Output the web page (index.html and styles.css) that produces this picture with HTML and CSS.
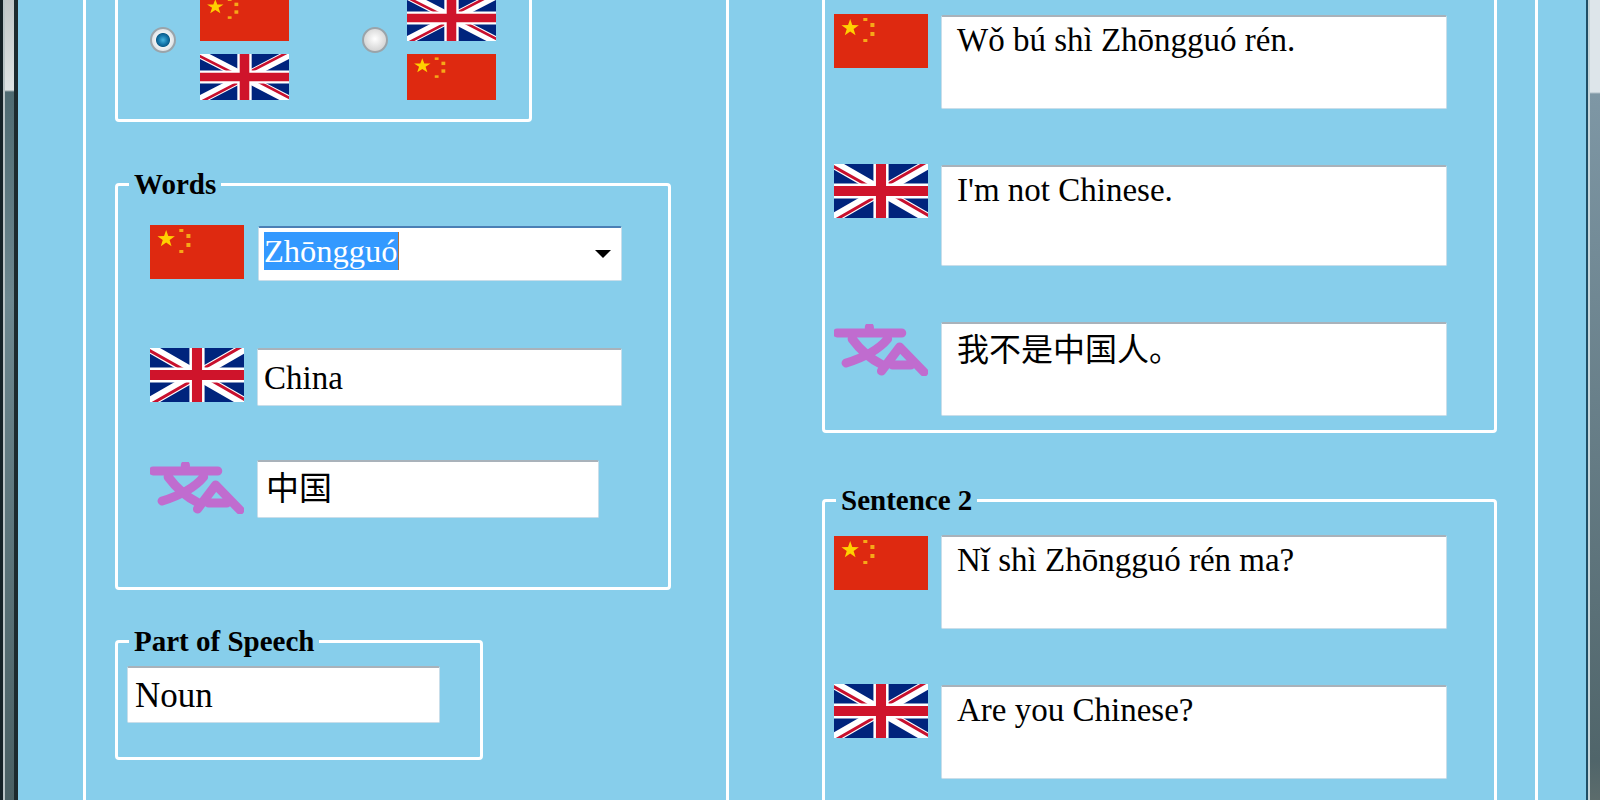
FILE: index.html
```html
<!DOCTYPE html>
<html lang="en">
<head>
    <meta charset="UTF-8">
    <title>Vocabulary</title>
    <link rel="stylesheet" href="styles.css">
</head>
<body>

<!-- shared flag and icon drawings -->
<svg class="defs" width="0" height="0">
    <symbol id="cn" viewBox="0 0 93 54" preserveAspectRatio="none">
        <rect width="93" height="54" fill="#de2910"/>
        <polygon fill="#ffd000" points="16,5 18.1,11.1 24.6,11.2 19.4,15 21.3,21.3 16,17.6 10.7,21.3 12.6,15 7.4,11.2 13.9,11.1"/>
        <rect x="29" y="4" width="4" height="3" fill="#f6a818"/>
        <rect x="36" y="9" width="4" height="4" fill="#f6a818"/>
        <rect x="36" y="18" width="4" height="4" fill="#f6a818"/>
        <rect x="29" y="25" width="4" height="3" fill="#f6a818"/>
    </symbol>
    <symbol id="uk" viewBox="0 0 93 54" preserveAspectRatio="none">
        <rect width="93" height="54" fill="#00247d"/>
        <path d="M0 0L93 54M93 0L0 54" stroke="#fff" stroke-width="10"/>
        <path d="M-1.3 2L41 26M91.7 -2L45 25M94.3 52L47.8 25M1.3 56L47.8 29" stroke="#c8102e" stroke-width="3"/>
        <path d="M46.5 0V54M0 27H93" stroke="#fff" stroke-width="15"/>
        <path d="M46.5 0V54M0 27H93" stroke="#cf142b" stroke-width="10"/>
    </symbol>
    <symbol id="lang" viewBox="0 0 93 52" preserveAspectRatio="none">
        <g fill="none" stroke="#c06ccf" stroke-width="9" stroke-linecap="round" stroke-linejoin="round">
            <path d="M3 9H67M35 3V9M18 15C26 26 38 36 48 41M53 15C44 26 28 34 12 39"/>
            <path d="M47 47L65 23L89 48M58 41H76"/>
        </g>
    </symbol>
</svg>

<div class="window">
    <div class="frame-left"></div>

    <div class="content">
        <div class="panel">

            <!-- left column -->
            <div class="col-left">
                <fieldset class="box box-order">
                    <div class="choice choice-first">
                        <span class="radio radio-on"></span>
                        <div class="flag-stack">
                            <svg class="flag-small"><use href="#cn"/></svg>
                            <svg class="flag-small"><use href="#uk"/></svg>
                        </div>
                    </div>
                    <div class="choice">
                        <span class="radio"></span>
                        <div class="flag-stack">
                            <svg class="flag-small"><use href="#uk"/></svg>
                            <svg class="flag-small"><use href="#cn"/></svg>
                        </div>
                    </div>
                </fieldset>

                <fieldset class="box box-words">
                    <legend>Words</legend>
                    <div class="row row-word1">
                        <svg class="flag"><use href="#cn"/></svg>
                        <div class="field field-select"><span class="selected">Zhōngguó</span><span class="arrow"></span></div>
                    </div>
                    <div class="row row-word2">
                        <svg class="flag"><use href="#uk"/></svg>
                        <div class="field field-word">China</div>
                    </div>
                    <div class="row row-word3">
                        <svg class="flag flag-lang"><use href="#lang"/></svg>
                        <div class="field field-word field-short cjk">中国</div>
                    </div>
                </fieldset>

                <fieldset class="box box-part">
                    <legend>Part of Speech</legend>
                    <div class="field field-part">Noun</div>
                </fieldset>
            </div>

            <!-- right column -->
            <div class="col-right">
                <fieldset class="box box-sentence1">
                    <div class="row">
                        <svg class="flag flag-down"><use href="#cn"/></svg>
                        <div class="field field-text field-a">Wǒ bú shì Zhōngguó rén.</div>
                    </div>
                    <div class="row row-s2">
                        <svg class="flag"><use href="#uk"/></svg>
                        <div class="field field-text field-b">I'm not Chinese.</div>
                    </div>
                    <div class="row row-s3">
                        <svg class="flag flag-lang"><use href="#lang"/></svg>
                        <div class="field field-text field-c cjk">我不是中国人。</div>
                    </div>
                </fieldset>

                <fieldset class="box box-sentence2">
                    <legend>Sentence 2</legend>
                    <div class="row">
                        <svg class="flag"><use href="#cn"/></svg>
                        <div class="field field-text field-d">Nǐ shì Zhōngguó rén ma?</div>
                    </div>
                    <div class="row row-s5">
                        <svg class="flag"><use href="#uk"/></svg>
                        <div class="field field-text field-e">Are you Chinese?</div>
                    </div>
                </fieldset>
            </div>

        </div>
    </div>

    <div class="frame-right"></div>
</div>

</body>
</html>
```

FILE: styles.css
```css
html, body {
    margin: 0;
    height: 800px;
    overflow: hidden;
}
body {
    font-family: "Liberation Serif", "Noto Sans CJK SC", serif;
    color: #000;
    background-color: #87ceeb;
}
.defs {
    display: block;
    height: 0;
}

/* Window frame */
.window {
    display: flex;
    height: 800px;
}
.frame-left {
    width: 18px;
    flex: none;
    background:
        linear-gradient(90deg, #152227 0 3px, #b9c4c6 3px 5px, transparent 5px 14px, #1c2a2e 14px 18px),
        linear-gradient(180deg, #c0c6c7 0, #dfe4e4 90px, #4f6b72 92px, #6d8890 300px, #4a6064 800px);
}
.frame-right {
    width: 14px;
    flex: none;
    background:
        linear-gradient(90deg, #1f4f66 0 2px, #c4d4d8 2px 4px, transparent 4px),
        linear-gradient(180deg, #dde5ea 0, #dde5ea 92px, #7e97a5 94px, #50656a 760px, #5c6c6c 800px);
}
.content {
    flex: 1;
    overflow: hidden;
    padding-left: 65px;
}

/* Panel and columns */
.panel {
    display: flex;
    width: 1449px;
    margin-top: -60px;
    height: 900px;
    border-left: 3px solid #fff;
    border-right: 3px solid #fff;
}
.col-left {
    width: 643px;
    flex: none;
    padding-left: 29px;
    box-sizing: border-box;
    border-right: 3px solid #fff;
}
.col-right {
    flex: 1;
    padding-left: 93px;
}

/* Fieldsets */
.box {
    margin: 0;
    padding: 0;
    min-width: 0;
    box-sizing: border-box;
    border: 3px solid #fff;
    border-radius: 4px;
}
.box legend {
    padding: 0 5px;
    font-size: 29px;
    font-weight: bold;
    line-height: 32px;
}
.box-order {
    display: flex;
    width: 417px;
    height: 182px;
    padding: 52px 0 0 32px;
}
.box-words {
    width: 556px;
    height: 422px;
    margin-top: 46px;
    padding: 25px 0 0 32px;
}
.box-words legend {
    margin-left: -21px;
}
.box-part {
    width: 368px;
    height: 135px;
    margin-top: 35px;
    padding: 0 0 0 9px;
}
.box-part legend {
    margin-left: 2px;
}
.box-sentence1 {
    width: 675px;
    height: 493px;
    padding: 71px 0 0 9px;
}
.box-sentence2 {
    width: 675px;
    height: 400px;
    margin-top: 51px;
    padding: 20px 0 0 9px;
}
.box-sentence2 legend {
    margin-left: 2px;
}

/* Radio choice */
.choice {
    display: flex;
    align-items: flex-start;
    gap: 19px;
}
.choice-first {
    gap: 24px;
    width: 212px;
}
.flag-stack {
    display: flex;
    flex-direction: column;
    gap: 13px;
}
.flag-small {
    display: block;
    width: 89px;
    height: 46px;
}
.radio {
    width: 26px;
    height: 26px;
    margin-top: 32px;
    flex: none;
    box-sizing: border-box;
    border: 2px solid #9aa4aa;
    border-radius: 50%;
    background: radial-gradient(circle at 50% 45%, #fff 0, #dcdcdc 60%, #c6c6c6 100%);
}
.radio-on {
    background: radial-gradient(circle, #45b4e0 0, #1173a8 30%, #0e5f8c 42%, #eef2f4 48%, #dfe3e6 70%, #b8bec2 100%);
}

/* Rows */
.row {
    display: flex;
    align-items: flex-start;
    gap: 13px;
}
.flag {
    display: block;
    width: 94px;
    height: 54px;
    flex: none;
}
.flag-lang {
    height: 52px;
}
.row-word2 {
    margin-top: 67px;
}
.row-word3 {
    margin-top: 56px;
}
.row-s2 {
    margin-top: 55px;
}
.row-s3 {
    margin-top: 58px;
}
.row-s5 {
    margin-top: 55px;
}

/* Text fields */
.field {
    box-sizing: border-box;
    background-color: #fff;
    border: 1px solid #c9deea;
    border-top: 2px solid #a9b2ba;
    border-radius: 2px;
    font-size: 33px;
    line-height: 38px;
    white-space: nowrap;
}
.field-select {
    display: flex;
    align-items: flex-start;
    width: 364px;
    height: 55px;
    margin: 1px 0 0 1px;
    padding: 4px 0 0 5px;
    border-top-color: #4a7fb5;
    font-size: 32.5px;
}
.selected {
    color: #fff;
    background-color: #3399ff;
    border-right: 1px solid #b0703a;
}
.arrow {
    width: 0;
    height: 0;
    margin: 18px 10px 0 auto;
    border-left: 8px solid transparent;
    border-right: 8px solid transparent;
    border-top: 8px solid #000;
}
.field-word {
    width: 365px;
    height: 58px;
    padding: 9px 0 0 6px;
}
.field-short {
    width: 342px;
    margin-top: -2px;
    padding: 5px 0 0 8px;
    font-size: 33px;
}
.field-part {
    width: 313px;
    height: 57px;
    margin-top: 9px;
    padding: 9px 0 0 7px;
    font-size: 35px;
}
.field-text {
    width: 506px;
    height: 94px;
    padding: 4px 0 0 15px;
}
.field-a {
    margin-top: 1px;
}
.field-b {
    height: 101px;
    margin-top: 1px;
}
.field-c {
    margin-top: -2px;
    font-size: 32px;
}
.field-d {
    margin-top: -1px;
}
.field-e {
    margin-top: 1px;
}
.cjk {
    font-family: "Noto Sans CJK SC", "Liberation Serif", serif;
}
```
